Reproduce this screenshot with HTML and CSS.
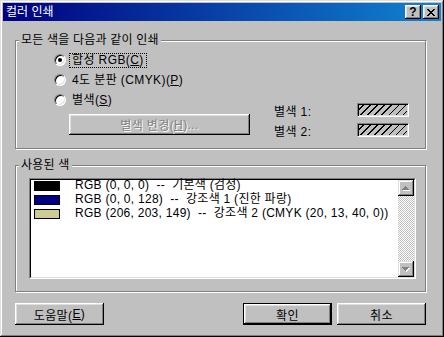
FILE: index.html
```html
<!DOCTYPE html>
<html lang="ko">
<head><meta charset="utf-8"><title>컬러 인쇄</title>
<link rel="stylesheet" href="styles.css">
</head>
<body>
<div class="win">
 <div class="titlebar">
  <span class="title">컬러 인쇄</span>
  <span class="tbtn help">?</span>
  <span class="tbtn close"><svg width="8" height="7" viewBox="0 0 8 7" shape-rendering="crispEdges"><path d="M0 0h2v1h-2zM6 0h2v1h-2zM1 1h2v1h-2zM5 1h2v1h-2zM2 2h4v1h-4zM3 3h2v1h-2zM2 4h4v1h-4zM1 5h2v1h-2zM5 5h2v1h-2zM0 6h2v1h-2zM6 6h2v1h-2z"/></svg></span>
 </div>

 <div class="content">
  <div class="group g1">
   <div class="legend">모든 색을 다음과 같이 인쇄</div>
   <div class="radio"><span class="dot on"></span><span class="lbl focus">합성 RGB(<u>C</u>)</span></div>
   <div class="radio"><span class="dot"></span><span class="lbl">4도 분판 (CMYK)(<u>P</u>)</span></div>
   <div class="radio"><span class="dot"></span><span class="lbl">별색(<u>S</u>)</span></div>
   <div class="lower">
    <div class="btn spotbtn disabled">별색 변경(<u>H</u>)...</div>
    <div class="spot">
     <span class="spotlbl">별색 1:</span><span class="hatch"></span>
     <span class="spotlbl">별색 2:</span><span class="hatch"></span>
    </div>
   </div>
  </div>

  <div class="group g2">
   <div class="legend">사용된 색</div>
   <div class="list">
    <div class="list-in">
     <div class="items">
      <div class="item"><span class="sw" style="background:#000000"></span><span class="txt">RGB (0, 0, 0)  --  기본색 (검정)</span></div>
      <div class="item"><span class="sw" style="background:#000080"></span><span class="txt">RGB (0, 0, 128)  --  강조색 1 (진한 파랑)</span></div>
      <div class="item"><span class="sw" style="background:#cecb95"></span><span class="txt">RGB (206, 203, 149)  --  강조색 2 (CMYK (20, 13, 40, 0))</span></div>
     </div>
     <div class="vscroll">
      <div class="sbtn"><svg width="8" height="5" viewBox="0 0 8 5" shape-rendering="crispEdges"><path fill="#fff" d="M4 1h1v1h-1zM3 2h3v1h-3zM2 3h5v1h-5zM1 4h7v1h-7z"/><path fill="#808080" d="M3 0h1v1h-1zM2 1h3v1h-3zM1 2h5v1h-5zM0 3h7v1h-7z"/></svg></div>
      <div class="track"></div>
      <div class="sbtn"><svg width="8" height="5" viewBox="0 0 8 5" shape-rendering="crispEdges"><path fill="#fff" d="M1 1h7v1h-7zM2 2h5v1h-5zM3 3h3v1h-3zM4 4h1v1h-1z"/><path fill="#808080" d="M0 0h7v1h-7zM1 1h5v1h-5zM2 2h3v1h-3zM3 3h1v1h-1z"/></svg></div>
     </div>
    </div>
   </div>
  </div>

  <div class="buttons">
   <div class="btn">도움말(<u>E</u>)</div>
   <div class="spacer"></div>
   <div class="btn default">확인</div>
   <div class="btn">취소</div>
  </div>
 </div>
</div>
</body>
</html>
```

FILE: styles.css
```css
html{font-family:"Liberation Sans","Noto Sans CJK KR",sans-serif;font-size:12px;letter-spacing:0.4px}
body{margin:0;background:#c0c0c0}
u{text-decoration:underline;text-underline-offset:1px}

.win{width:444px;height:337px;box-sizing:border-box;padding:3px;display:flex;flex-direction:column;background:#c0c0c0;
 box-shadow:inset -1px -1px #000,inset 1px 1px #dfdfdf,inset -2px -2px #808080,inset 2px 2px #fff}

.titlebar{height:18px;display:flex;align-items:center;padding:0 2px 0 3px;background:linear-gradient(90deg,#000080,#1084d0)}
.title{flex:1;color:#fff;line-height:18px;letter-spacing:0}
.tbtn{width:16px;height:14px;box-sizing:border-box;display:flex;align-items:center;justify-content:center;background:#c0c0c0;
 box-shadow:inset -1px -1px #000,inset 1px 1px #fff,inset -2px -2px #808080,inset 2px 2px #dfdfdf;
 font-weight:bold;font-size:12px;line-height:1;color:#000;letter-spacing:0}
.help{margin-right:2px;padding-bottom:1px}

.content{flex:1;display:flex;flex-direction:column;padding:19px 15px 0 12px}

.group{position:relative;box-sizing:border-box;border:1px solid #808080;box-shadow:inset 1px 1px #fff,1px 1px #fff}
.legend{position:absolute;left:3px;top:-8px;padding:0 2px;line-height:14px;background:#c0c0c0;white-space:nowrap;letter-spacing:0.2px}

.g1{height:109px;padding:9px 0 0 38px}
.radio{height:20px;display:flex;align-items:center}
.dot{position:relative;width:12px;height:12px;box-sizing:border-box;border:1px solid;border-color:#808080 #fff #fff #808080;border-radius:50%;
 background:#fff;box-shadow:inset 1px 1px #000,inset -1px -1px #dfdfdf;margin-right:4px}
.dot.on::after{content:"";position:absolute;left:3px;top:3px;width:4px;height:4px;border-radius:50%;background:#000}
.lbl{padding:0 2px;line-height:13px}
.focus{outline:1px dotted #000}

.lower{display:flex;margin-top:-7px}
.btn{width:89px;height:22px;box-sizing:border-box;display:flex;align-items:center;justify-content:center;background:#c0c0c0;
 box-shadow:inset -1px -1px #000,inset 1px 1px #fff,inset -2px -2px #808080,inset 2px 2px #dfdfdf}
.btn.default{border:1px solid #000}
.spotbtn{width:181px;height:21px;margin:11px 0 0 15px}
.disabled{color:#808080;text-shadow:1px 1px #fff}
.spot{display:grid;grid-template-columns:83px 52px;grid-auto-rows:14px;row-gap:6px;margin-left:24px;align-items:center}
.hatch{height:14px;box-sizing:border-box;border:1px solid;border-color:#808080 #fff #fff #808080;
 background:repeating-linear-gradient(135deg,#c0c0c0 0 4px,#000 4px 5px);box-shadow:inset 1px 1px #000,inset -1px -1px #dfdfdf}

.g2{height:127px;margin-top:16px;padding:12px 0 0 13px}
.list{width:387px;height:101px;box-sizing:border-box;border:1px solid;border-color:#808080 #fff #fff #808080}
.list-in{height:100%;box-sizing:border-box;border:1px solid;border-color:#000 #dfdfdf #dfdfdf #000;display:flex;background:#fff}
.items{flex:1;padding-left:3px}
.item{height:14px;display:flex;align-items:flex-start}
.sw{width:26px;height:10px;box-sizing:border-box;border:1px solid #000;margin:1px 15px 0 0}
.txt{white-space:pre;line-height:13px;margin-top:-1px;letter-spacing:0.27px}
.vscroll{width:16px;display:flex;flex-direction:column}
.sbtn{height:16px;box-sizing:border-box;display:flex;align-items:center;justify-content:center;background:#c0c0c0;
 box-shadow:inset -1px -1px #000,inset 1px 1px #dfdfdf,inset -2px -2px #808080,inset 2px 2px #fff}
.track{flex:1;background:repeating-conic-gradient(#fff 0 25%,#c0c0c0 0 50%) 0 0/2px 2px}

.buttons{display:flex;gap:5px;margin-top:11px}
.spacer{flex:1}
```
